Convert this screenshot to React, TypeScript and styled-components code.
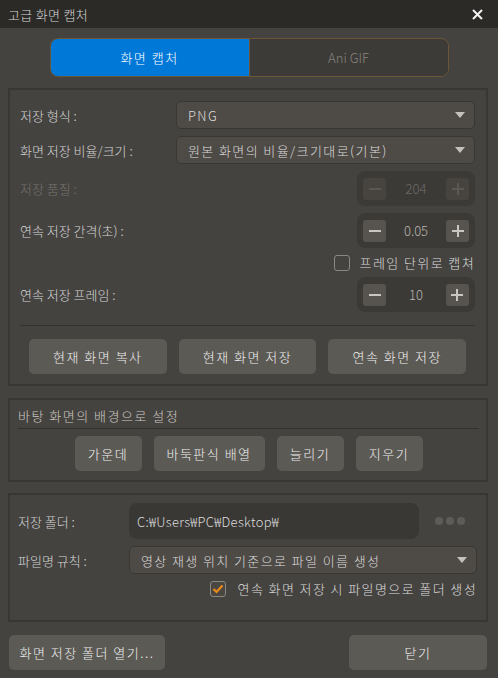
import React from 'react'
import styled, { createGlobalStyle } from 'styled-components'

const GlobalStyle = createGlobalStyle`
  html, body {
    margin: 0;
    padding: 0;
    background: #454340;
  }
  body {
    font-family: 'Noto Sans CJK KR', 'Noto Sans', sans-serif;
    font-size: 13px;
    font-weight: 300;
    color: #dcdcdc;
  }
`

const Window = styled.div`
  width: 498px;
  height: 678px;
  display: flex;
  flex-direction: column;
  background: #454340;
  overflow: hidden;
`

const TitleBar = styled.div`
  height: 28px;
  flex: none;
  display: flex;
  align-items: center;
  justify-content: space-between;
  padding: 0 15px 0 8px;
  background: #2b2a26;
  color: #d6d6d6;
  font-size: 13px;
  letter-spacing: 0.3px;
`

const CloseButton = styled.div`
  width: 11px;
  height: 11px;
  display: flex;
  svg {
    display: block;
  }
`

const Body = styled.div`
  display: flex;
  flex-direction: column;
  padding: 0 10px 0 8px;
`

const Tabs = styled.div`
  align-self: center;
  width: 399px;
  height: 39px;
  margin: 10px 0 0 2px;
  display: flex;
  border: 1px solid #6b5738;
  border-radius: 8px;
  overflow: hidden;
  box-sizing: border-box;
`

const Tab = styled.div<{ $active?: boolean }>`
  flex: 1;
  display: flex;
  align-items: center;
  justify-content: center;
  font-size: 13px;
  letter-spacing: ${(p) => (p.$active ? '1.5px' : '0')};
  background: ${(p) => (p.$active ? '#0078d7' : '#3d3b38')};
  color: ${(p) => (p.$active ? '#ffffff' : '#86837d')};
  & + & {
    border-left: 1px solid #6b5738;
  }
`

const Panel = styled.div<{ $top: number }>`
  margin-top: ${(p) => p.$top}px;
  border: 2px solid #393734;
  display: flex;
  flex-direction: column;
`

const CaptureBody = styled.div`
  padding: 11px 11px 10px 10px;
  display: flex;
  flex-direction: column;
`

const FormRows = styled.div`
  display: flex;
  flex-direction: column;
  gap: 7px;
`

const Row = styled.div`
  display: flex;
  align-items: center;
`

const Label = styled.div<{ $width?: number; $disabled?: boolean }>`
  width: ${(p) => (p.$width ? `${p.$width}px` : 'auto')};
  flex: ${(p) => (p.$width ? 'none' : '1')};
  color: ${(p) => (p.$disabled ? '#75726d' : '#d4d4d4')};
  white-space: nowrap;
`

const Select = styled.div<{ $width: number }>`
  width: ${(p) => p.$width}px;
  height: 28px;
  box-sizing: border-box;
  display: flex;
  align-items: center;
  justify-content: space-between;
  padding: 0 9px 0 11px;
  background: #4e4a46;
  border: 1px solid #393734;
  border-radius: 5px;
  color: #dcdcdc;
  letter-spacing: 1.4px;
  white-space: nowrap;
`

const Arrow = styled.span`
  width: 0;
  height: 0;
  border-left: 5px solid transparent;
  border-right: 5px solid transparent;
  border-top: 6px solid #c4c0ba;
`

const Stepper = styled.div<{ $disabled?: boolean }>`
  width: 118px;
  height: 35px;
  box-sizing: border-box;
  margin-left: auto;
  display: flex;
  align-items: center;
  justify-content: space-between;
  padding: 0 6px;
  background: #3c3a37;
  border-radius: 8px;
  color: ${(p) => (p.$disabled ? '#6e6b66' : '#b9b6b0')};
`

const StepButton = styled.div<{ $disabled?: boolean }>`
  width: 23px;
  height: 22px;
  border-radius: 3px;
  display: flex;
  align-items: center;
  justify-content: center;
  background: ${(p) => (p.$disabled ? '#47443f' : '#57544f')};
  color: ${(p) => (p.$disabled ? '#5b5854' : '#c9c6c0')};
  svg {
    display: block;
  }
`

const CheckRow = styled.div<{ $gap?: number }>`
  display: flex;
  align-items: center;
  justify-content: flex-end;
  gap: ${(p) => p.$gap ?? 10}px;
  height: 15px;
  color: #dcdcdc;
  letter-spacing: 1.4px;
  white-space: nowrap;
`

const Checkbox = styled.span<{ $checked?: boolean }>`
  width: 16px;
  height: 16px;
  flex: none;
  box-sizing: border-box;
  border: 1px solid #8b8781;
  border-radius: 3px;
  background: ${(p) => (p.$checked ? '#4a4743' : 'transparent')};
  display: flex;
  align-items: center;
  justify-content: center;
  svg {
    display: block;
  }
`

const Divider = styled.div<{ $top: number }>`
  height: 1px;
  margin-top: ${(p) => p.$top}px;
  background: #343230;
`

const ButtonRow = styled.div<{ $center?: boolean; $top: number; $inset?: number }>`
  display: flex;
  gap: 12px;
  margin-top: ${(p) => p.$top}px;
  padding: 0 ${(p) => p.$inset ?? 0}px;
  justify-content: ${(p) => (p.$center ? 'center' : 'space-between')};
`

const Button = styled.div<{ $width: number }>`
  width: ${(p) => p.$width}px;
  height: 35px;
  display: flex;
  align-items: center;
  justify-content: center;
  background: #5c5a55;
  border-radius: 5px;
  color: #f0f0f0;
  font-size: 13px;
  letter-spacing: 1.5px;
  white-space: nowrap;
`

const BackgroundBody = styled.div`
  padding: 6px 7px 9px 8px;
  display: flex;
  flex-direction: column;
`

const SectionTitle = styled.div`
  line-height: 20px;
  color: #cdc9c2;
  letter-spacing: 1.5px;
`

const FolderBody = styled.div`
  padding: 8px 9px 24px 8px;
  display: flex;
  flex-direction: column;
  gap: 7px;
`

const PathField = styled.div`
  width: 290px;
  height: 36px;
  box-sizing: border-box;
  display: flex;
  align-items: center;
  padding-left: 8px;
  background: #3a3835;
  border-radius: 8px;
  color: #dcdcdc;
  letter-spacing: 0.3px;
`

const Dots = styled.div`
  display: flex;
  gap: 3px;
  margin-left: 16px;
  span {
    width: 8px;
    height: 8px;
    border-radius: 50%;
    background: #5f5c58;
  }
`

const Footer = styled.div`
  margin-top: 13px;
  padding: 0 1px;
  display: flex;
  justify-content: space-between;
`

const Minus = () => (
  <svg width="14" height="14" viewBox="0 0 14 14">
    <path d="M1 7h12" stroke="currentColor" strokeWidth="2" />
  </svg>
)

const Plus = () => (
  <svg width="14" height="14" viewBox="0 0 14 14">
    <path d="M1 7h12M7 1v12" stroke="currentColor" strokeWidth="2" />
  </svg>
)

const NumberStepper = ({ value, disabled }: { value: string; disabled?: boolean }) => (
  <Stepper $disabled={disabled}>
    <StepButton $disabled={disabled}>
      <Minus />
    </StepButton>
    <span>{value}</span>
    <StepButton $disabled={disabled}>
      <Plus />
    </StepButton>
  </Stepper>
)

export default function App() {
  return (
    <Window>
      <GlobalStyle />
      <TitleBar>
        <span>고급 화면 캡처</span>
        <CloseButton>
          <svg width="11" height="11" viewBox="0 0 11 11">
            <path d="M1 1l9 9M10 1L1 10" stroke="#f2f2f2" strokeWidth="2" />
          </svg>
        </CloseButton>
      </TitleBar>
      <Body>
        <Tabs>
          <Tab $active>화면 캡처</Tab>
          <Tab>Ani GIF</Tab>
        </Tabs>

        <Panel $top={11}>
          <CaptureBody>
            <FormRows>
              <Row>
                <Label $width={156}>저장 형식 :</Label>
                <Select $width={299}>
                  <span>PNG</span>
                  <Arrow />
                </Select>
              </Row>
              <Row>
                <Label $width={156}>화면 저장 비율/크기 :</Label>
                <Select $width={299}>
                  <span>원본 화면의 비율/크기대로(기본)</span>
                  <Arrow />
                </Select>
              </Row>
              <Row>
                <Label $disabled>저장 품질 :</Label>
                <NumberStepper value="204" disabled />
              </Row>
              <Row>
                <Label>연속 저장 간격(초) :</Label>
                <NumberStepper value="0.05" />
              </Row>
              <CheckRow>
                <Checkbox />
                <span>프레임 단위로 캡쳐</span>
              </CheckRow>
              <Row>
                <Label>연속 저장 프레임 :</Label>
                <NumberStepper value="10" />
              </Row>
            </FormRows>
            <Divider $top={13} />
            <ButtonRow $top={13} $inset={9}>
              <Button $width={138}>현재 화면 복사</Button>
              <Button $width={138}>현재 화면 저장</Button>
              <Button $width={138}>연속 화면 저장</Button>
            </ButtonRow>
          </CaptureBody>
        </Panel>

        <Panel $top={12}>
          <BackgroundBody>
            <SectionTitle>바탕 화면의 배경으로 설정</SectionTitle>
            <Divider $top={2} />
            <ButtonRow $center $top={7}>
              <Button $width={67}>가운데</Button>
              <Button $width={111}>바둑판식 배열</Button>
              <Button $width={67}>늘리기</Button>
              <Button $width={67}>지우기</Button>
            </ButtonRow>
          </BackgroundBody>
        </Panel>

        <Panel $top={11}>
          <FolderBody>
            <Row>
              <Label $width={111}>저장 폴더 :</Label>
              <PathField>C:₩Users₩PC₩Desktop₩</PathField>
              <Dots>
                <span />
                <span />
                <span />
              </Dots>
            </Row>
            <Row>
              <Label $width={111}>파일명 규칙 :</Label>
              <Select $width={348}>
                <span>영상 재생 위치 기준으로 파일 이름 생성</span>
                <Arrow />
              </Select>
            </Row>
            <CheckRow $gap={12}>
              <Checkbox $checked>
                <svg width="12" height="10" viewBox="0 0 12 10">
                  <path d="M1.5 5l3 3 6-6.5" fill="none" stroke="#ec8a17" strokeWidth="2.2" />
                </svg>
              </Checkbox>
              <span>연속 화면 저장 시 파일명으로 폴더 생성</span>
            </CheckRow>
          </FolderBody>
        </Panel>

        <Footer>
          <Button $width={156}>화면 저장 폴더 열기...</Button>
          <Button $width={138}>닫기</Button>
        </Footer>
      </Body>
    </Window>
  )
}
